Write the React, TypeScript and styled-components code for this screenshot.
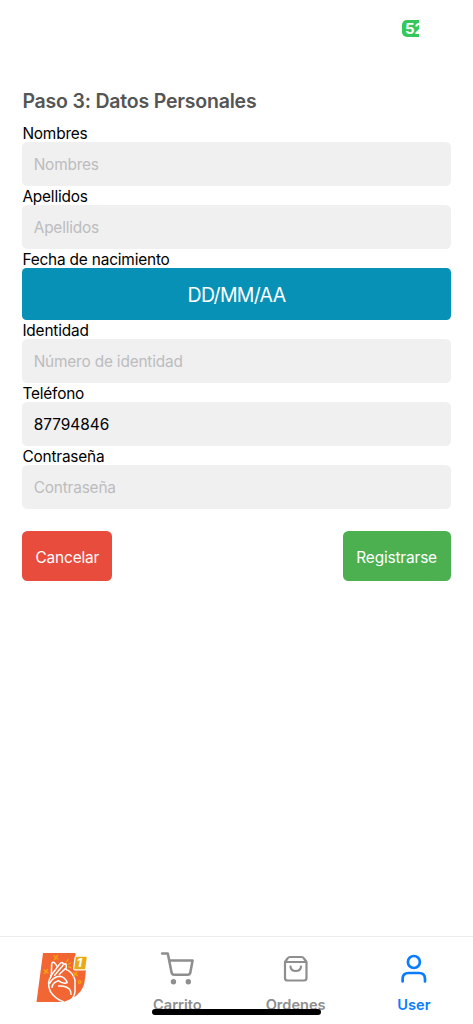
import React from 'react';
import styled, { createGlobalStyle } from 'styled-components';

const GlobalStyle = createGlobalStyle`
  * { box-sizing: border-box; }
  body { margin: 0; background: #fff; font-family: Inter, "Liberation Sans", sans-serif; }
  button, input { font-family: inherit; border: 0; margin: 0; }
`;

const Screen = styled.div`
  display: flex;
  flex-direction: column;
  height: 1024px;
  background: #fff;
  overflow: hidden;
`;

const StatusBar = styled.header`
  display: flex;
  justify-content: flex-end;
  height: 86px;
  padding: 20px 54px 0 0;
`;

const Battery = styled.div`
  width: 17px;
  height: 17px;
  padding-left: 3px;
  border-radius: 5px 0 0 5px;
  background: #34c759;
  color: #fff;
  font-size: 15px;
  font-weight: 700;
  line-height: 17px;
  white-space: nowrap;
  overflow: hidden;
`;

const Form = styled.main`
  flex: 1;
  padding: 0 22.4px;
`;

const Title = styled.h1`
  margin: 0;
  height: 37.3px;
  line-height: 30px;
  font-size: 19.5px;
  font-weight: 600;
  letter-spacing: -0.2px;
  color: #555;
`;

const Label = styled.label`
  display: block;
  height: 19px;
  padding-top: 1px;
  line-height: 19px;
  font-size: 15.4px;
  letter-spacing: -0.18px;
  color: #000;
`;

const Input = styled.input`
  display: block;
  width: 100%;
  height: 44px;
  padding: 1px 11.3px 0;
  border-radius: 5.5px;
  background: #f0f0f0;
  font-size: 15.4px;
  letter-spacing: 0;
  color: #000;
  outline: none;
  &::placeholder { color: #bcbcbe; opacity: 1; letter-spacing: -0.18px; }
`;

const DateButton = styled.button`
  display: block;
  width: 100%;
  height: 52px;
  padding: 2px 0 0;
  border-radius: 4.5px;
  background: #0891b7;
  color: #fff;
  font-size: 19.5px;
  letter-spacing: -0.7px;
`;

const Actions = styled.div`
  display: flex;
  justify-content: space-between;
  margin-top: 22px;
`;

const ActionButton = styled.button<{ $color: string; $width: number }>`
  width: ${(p) => p.$width}px;
  height: 50px;
  padding: 2px 0 0;
  border-radius: 5.5px;
  background: ${(p) => p.$color};
  color: #fff;
  font-size: 15.4px;
  letter-spacing: -0.15px;
`;

const TabBar = styled.nav`
  position: relative;
  display: grid;
  grid-template-columns: repeat(4, 1fr);
  height: 88px;
  border-top: 1px solid #ececec;
`;

const Tab = styled.a<{ $active?: boolean }>`
  display: flex;
  flex-direction: column;
  align-items: center;
  padding-top: 15px;
  color: ${(p) => (p.$active ? '#0a7cff' : '#8e8e8f')};
  svg { display: block; }
`;

const TabLabel = styled.span`
  margin-top: 9px;
  line-height: 20px;
  font-size: 14.6px;
  font-weight: 600;
`;

const HomeIndicator = styled.div`
  position: absolute;
  left: 152px;
  top: 72px;
  width: 169px;
  height: 6px;
  border-radius: 3px;
  background: #000;
`;

const LogoTab = styled(Tab)`
  padding: 12px 0 0 5px;
`;

const BadgeNumber = styled.text`
  font-size: 12px;
  font-weight: 800;
  font-style: italic;
`;

function Logo() {
  return (
    <svg width="56" height="56" viewBox="34 949 56 56" fill="none">
      <path d="M43 953h32.500v13h10.500q-.5 14-2.500 20-4 11-20 16H36.500z" fill="#f26633" />
      <g transform="translate(20 930) scale(.3333)" stroke="#fff" strokeWidth="4.500" strokeLinecap="round" strokeLinejoin="round">
        <path d="M130 215Q104 206 91 184Q79 158 94 138L95 103Q97 92 105 100L112 110" />
        <path d="M92 138L120 101Q127 92 131 104Q138 97 139 107L138 118Q158 126 165 150V184Q164 203 150 211" />
        <path d="M104 136L128 107M118 133L136 116" />
        <path d="M89 160Q101 139 120 139Q134 141 142 158Q129 163 115 152Q98 157 96 172" />
        <path d="M116 168Q136 166 148 177Q154 184 153 193" />
      </g>
      <g stroke="#f4a30c" strokeWidth="1.300" strokeLinecap="round">
        <path d="M54 956l4 3M57.500 955.500l-3 4M44 970l4 3M47.500 969.500l-3 4M73.500 972.500l4 3M77 972l-3 4" />
        <path d="M66.500 962l1.500-2.500M68 964.500l2.500-1.500M68.500 967l2.500.5" />
        <circle cx="79.700" cy="982" r="1.300" />
      </g>
      <path d="M76.500 957.500H86L84.500 968.500H75z" fill="#eaaa16" stroke="#fff" strokeWidth="4" strokeLinejoin="round" />
      <path d="M76.500 957.500H86L84.500 968.500H75z" fill="#eaaa16" stroke="#eaaa16" strokeWidth="1.500" strokeLinejoin="round" />
      <BadgeNumber x="76.800" y="967.300" fill="#fff">1</BadgeNumber>
    </svg>
  );
}

function CartIcon() {
  return (
    <svg width="34" height="34" viewBox="0 0 24 24" fill="none" stroke="currentColor" strokeWidth="1.800" strokeLinecap="round" strokeLinejoin="round">
      <path d="M1.500 1h4l2.680 13.390a2 2 0 0 0 2 1.610h9.220a2 2 0 0 0 2-1.610L23 6H6.500" />
      <circle cx="9.500" cy="21" r="1" />
      <circle cx="20" cy="21" r="1" />
    </svg>
  );
}

function BagIcon() {
  return (
    <svg width="34" height="34" viewBox="0 0 34 34" fill="none" stroke="currentColor" strokeWidth="2.200" strokeLinecap="round" strokeLinejoin="round">
      <path d="M6 10L8.500 6.500Q9.500 5 11 5H22.500q1.500 0 2.500 1.500l2.500 3.500V26q0 2.500-2.500 2.500H8.500Q6 28.500 6 26zM6 10H27.500" />
      <path d="M11.500 14.500c.5 6 10 6 10.500 0" />
    </svg>
  );
}

function UserIcon() {
  return (
    <svg width="34" height="34" viewBox="0 0 34 34" fill="none" stroke="currentColor" strokeWidth="2.700" strokeLinecap="round">
      <circle cx="16.900" cy="10" r="6" />
      <path d="M5.600 29.500v-2.500q0-6 6-6h10.400q6 0 6 6v2.500" />
    </svg>
  );
}

const fieldsBefore = [
  { label: 'Nombres', placeholder: 'Nombres' },
  { label: 'Apellidos', placeholder: 'Apellidos' },
];
const fieldsAfter = [
  { label: 'Identidad', placeholder: 'Número de identidad' },
  { label: 'Teléfono', placeholder: 'Teléfono', value: '87794846' },
  { label: 'Contraseña', placeholder: 'Contraseña', type: 'password' },
];

function Field({ label, placeholder, value, type = 'text' }: { label: string; placeholder: string; value?: string; type?: string }) {
  return (
    <div>
      <Label>{label}</Label>
      <Input aria-label={label} type={type} placeholder={placeholder} defaultValue={value} />
    </div>
  );
}

export default function App() {
  return (
    <>
      <GlobalStyle />
      <Screen>
        <StatusBar>
          <Battery>52</Battery>
        </StatusBar>
        <Form>
          <Title>Paso 3: Datos Personales</Title>
          {fieldsBefore.map((f) => <Field key={f.label} {...f} />)}
          <Label as="div">Fecha de nacimiento</Label>
          <DateButton>DD/MM/AA</DateButton>
          {fieldsAfter.map((f) => <Field key={f.label} {...f} />)}
          <Actions>
            <ActionButton $color="#e74c3c" $width={90}>Cancelar</ActionButton>
            <ActionButton $color="#4caf50" $width={108}>Registrarse</ActionButton>
          </Actions>
        </Form>
        <TabBar>
          <LogoTab><Logo /></LogoTab>
          <Tab><CartIcon /><TabLabel>Carrito</TabLabel></Tab>
          <Tab><BagIcon /><TabLabel>Ordenes</TabLabel></Tab>
          <Tab $active><UserIcon /><TabLabel>User</TabLabel></Tab>
          <HomeIndicator />
        </TabBar>
      </Screen>
    </>
  );
}
